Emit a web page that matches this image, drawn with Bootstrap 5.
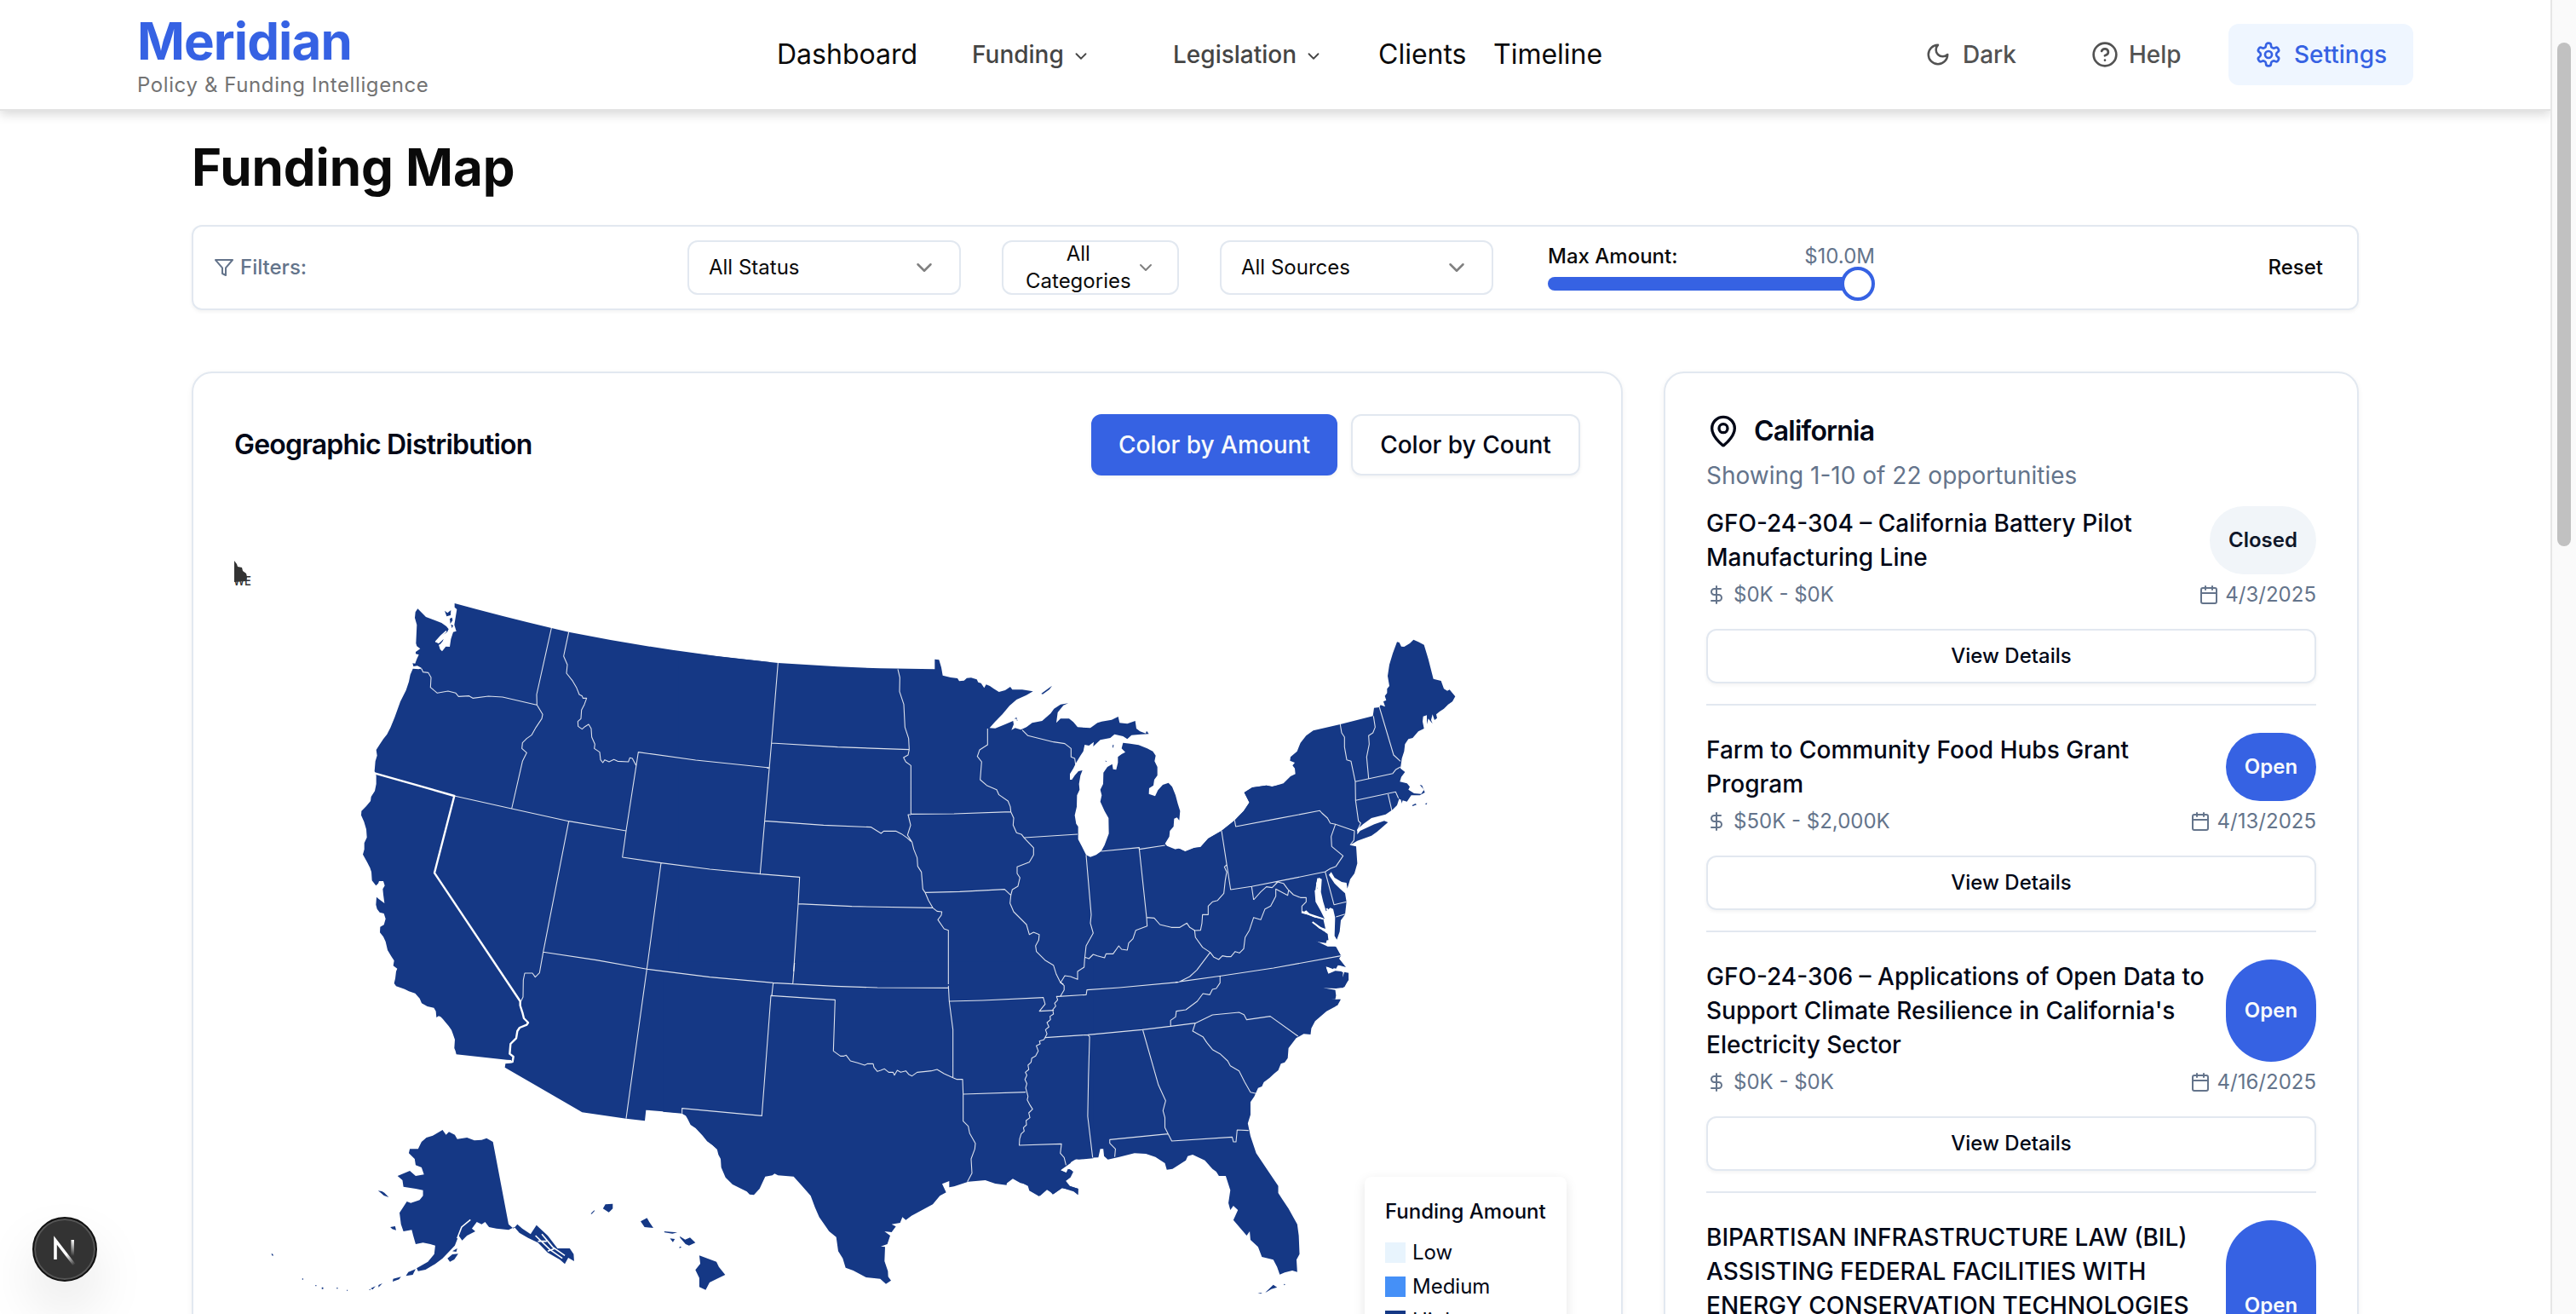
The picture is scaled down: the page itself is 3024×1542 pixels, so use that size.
<!DOCTYPE html>
<html lang="en">
<head>
<meta charset="utf-8">
<title>Meridian – Funding Map</title>
<link href="https://cdn.jsdelivr.net/npm/bootstrap@5.3.0/dist/css/bootstrap.min.css" rel="stylesheet">
<style>
:root{--brand:#3662e3;--line:#e2e8f0;--muted:#64748b;--ink:#020817;--land:#153885}
html,body{height:1542px;overflow:hidden}
body{font-family:Inter,sans-serif;color:var(--ink);background:#fff;font-size:24px;line-height:32px}
svg{display:block;flex:none}
.ico{fill:none;stroke:currentColor;stroke-width:2;stroke-linecap:round;stroke-linejoin:round}
.page-col{width:2994px;height:1542px;overflow:hidden}
.scroll-track{width:30px;background:#fafafa;border-left:2px solid #e6e6e6;padding:50px 6px 0}
.scroll-thumb{height:591px;border-radius:8px;background:#c1c1c1}
.topbar{height:130px;border-bottom:2px solid #e3e3e3;box-shadow:0 4px 12px rgba(0,0,0,.16);padding:0 161px;position:relative;background:#fff}
.logo-name{font-size:60px;font-weight:700;line-height:60px;letter-spacing:-.9px;color:var(--brand);margin-top:18px}
.logo-tag{font-size:24px;line-height:32px;letter-spacing:.6px;color:#737373;margin-top:6px}
.logo-box{width:751px}
.nav-main{font-size:32px;color:#0a0a0a;height:128px}
.nav-drop{font-size:28px;font-weight:500;color:#454545}
.act{font-size:28px;font-weight:500;color:#525252;gap:14px}
.act-set{background:#eff6ff;color:var(--brand);border-radius:12px;width:217px;height:72px}
.h-title{font-size:60px;font-weight:700;line-height:72px;letter-spacing:-.05px;color:#0a0a0a;margin:30px 0 0}
.main-col{padding-left:225px;width:2769px}
.filterbar{height:100px;margin-top:32px;border:2px solid var(--line);border-radius:12px;box-shadow:0 2px 4px rgba(0,0,0,.05);padding-left:24px}
.pick{height:64px;border:2px solid var(--line);border-radius:12px;padding:0 26px 0 23px;color:#0a0a0a}
.pick svg{color:#808080}
.slider-track{height:16px;border-radius:8px;background:var(--brand);width:370px}
.slider-knob{position:absolute;right:0;top:-12px;width:40px;height:40px;border-radius:50%;border:4px solid var(--brand);background:#fff}
.panel{border:2px solid var(--line);border-radius:24px;padding:48px;height:1250px;box-shadow:0 2px 6px rgba(0,0,0,.06);background:#fff}
.panel-map{width:1680px}.panel-list{width:816px}
.ptitle{font-size:32px;font-weight:600;letter-spacing:-.8px;line-height:40px}
.tbtn{height:72px;border-radius:12px;font-size:28px;font-weight:500;border:2px solid var(--line);box-shadow:0 2px 4px rgba(0,0,0,.05)}
.tbtn-on{background:var(--brand);border-color:var(--brand);color:#f8fafc}
.muted{color:var(--muted)}
.sub{font-size:28px;line-height:40px;margin:12px 0 16px}
.op{border-bottom:2px solid var(--line);padding-bottom:24px;margin-bottom:32px}
.op-t{font-size:28px;line-height:40px;font-weight:500;white-space:nowrap}
.pill{border-radius:60px;font-weight:600;width:106px;background:var(--brand);color:#f8fafc}
.pill-c{background:#f1f5f9;color:#0f172a;width:125px}
.vbtn{height:64px;border:2px solid var(--line);border-radius:12px;margin-top:24px;font-weight:500;box-shadow:0 2px 4px rgba(0,0,0,.05)}
.legend{position:absolute;left:1375px;top:943px;width:237px;padding:25px 24px;background:#fff;border-radius:8px;box-shadow:0 4px 14px rgba(0,0,0,.1)}
.sw{width:24px;height:24px}
.devbadge{position:absolute;left:38px;top:1428px;width:76px;height:76px;border-radius:50%;background:#333;border:2px solid #111;box-shadow:inset 0 0 0 2px #555,0 32px 64px rgba(0,0,0,.1)}
.land path{fill:var(--land)}
.edge path{fill:none;stroke:#fff;stroke-width:1.1;stroke-linejoin:round;vector-effect:non-scaling-stroke;opacity:.85}
.edge path.sel{stroke-width:2.4;opacity:1}
.cut{stroke:#fff;vector-effect:non-scaling-stroke}
</style>
</head>
<body>
<svg width="0" height="0" class="position-absolute">
<symbol id="chev" viewBox="0 0 24 24"><path d="m6 9 6 6 6-6"/></symbol>
<symbol id="usd" viewBox="0 0 24 24"><path d="M12 2v20M17 5H9.500a3.500 3.500 0 0 0 0 7h5a3.500 3.500 0 0 1 0 7H6"/></symbol>
<symbol id="cal" viewBox="0 0 24 24"><path d="M8 2v4M16 2v4M3 10h18"/><rect x="3" y="4" width="18" height="18" rx="2"/></symbol>
</svg>
<div class="d-flex">
<div class="page-col">
<header class="topbar d-flex">
  <div class="logo-box"><div class="logo-name">Meridian</div><div class="logo-tag">Policy &amp; Funding Intelligence</div></div>
  <nav class="nav-main d-flex align-items-center">
    <span style="width:229px">Dashboard</span>
    <span class="nav-drop d-flex align-items-center" style="width:236px;gap:9px">Funding <svg class="ico mt-1" width="22" height="22"><use href="#chev"/></svg></span>
    <span class="nav-drop d-flex align-items-center" style="width:241px;gap:9px">Legislation <svg class="ico mt-1" width="22" height="22"><use href="#chev"/></svg></span>
    <span style="width:135px">Clients</span><span>Timeline</span>
  </nav>
  <div class="d-flex align-items-center ms-auto" style="height:128px">
    <div class="act d-flex align-items-center" style="width:195px"><svg class="ico" width="30" height="30" viewBox="0 0 24 24"><path d="M12 3a6 6 0 0 0 9 9 9 9 0 1 1-9-9Z"/></svg>Dark</div>
    <div class="act d-flex align-items-center" style="width:161px;gap:12px"><svg class="ico" width="32" height="32" viewBox="0 0 24 24"><circle cx="12" cy="12" r="10"/><path d="M9.090 9a3 3 0 0 1 5.830 1c0 2-3 3-3 3M12 17h.01"/></svg>Help</div>
    <div class="act act-set d-flex align-items-center justify-content-center"><svg class="ico" width="32" height="32" viewBox="0 0 24 24"><path d="M12.220 2h-.44a2 2 0 0 0-2 2v.18a2 2 0 0 1-1 1.730l-.43.25a2 2 0 0 1-2 0l-.15-.08a2 2 0 0 0-2.730.73l-.22.38a2 2 0 0 0 .73 2.730l.15.1a2 2 0 0 1 1 1.720v.51a2 2 0 0 1-1 1.740l-.15.09a2 2 0 0 0-.73 2.730l.22.38a2 2 0 0 0 2.730.73l.15-.08a2 2 0 0 1 2 0l.43.25a2 2 0 0 1 1 1.730V20a2 2 0 0 0 2 2h.44a2 2 0 0 0 2-2v-.18a2 2 0 0 1 1-1.730l.43-.25a2 2 0 0 1 2 0l.15.08a2 2 0 0 0 2.730-.73l.22-.39a2 2 0 0 0-.73-2.730l-.15-.08a2 2 0 0 1-1-1.740v-.5a2 2 0 0 1 1-1.740l.15-.09a2 2 0 0 0 .73-2.730l-.22-.38a2 2 0 0 0-2.730-.73l-.15.08a2 2 0 0 1-2 0l-.43-.25a2 2 0 0 1-1-1.730V4a2 2 0 0 0-2-2z"/><circle cx="12" cy="12" r="3"/></svg>Settings</div>
  </div>
</header>
<main class="main-col">
  <h1 class="h-title">Funding Map</h1>
  <div class="filterbar d-flex align-items-center">
    <div class="muted d-flex align-items-center" style="width:556px;gap:7px;font-weight:500"><svg class="ico" width="24" height="24" viewBox="0 0 24 24"><path d="M22 3H2l8 9.460V19l4 2v-8.540L22 3z"/></svg>Filters:</div>
    <div class="pick d-flex align-items-center justify-content-between" style="width:321px">All Status<svg class="ico" width="30" height="30"><use href="#chev"/></svg></div>
    <div class="pick d-flex align-items-center justify-content-between text-center" style="width:208px;margin:0 48px;padding:0 25px 0 26px">All<br>Categories<svg class="ico" width="24" height="24"><use href="#chev"/></svg></div>
    <div class="pick d-flex align-items-center justify-content-between" style="width:321px">All Sources<svg class="ico" width="30" height="30"><use href="#chev"/></svg></div>
    <div style="width:384px;margin-left:64px">
      <div class="d-flex justify-content-between" style="height:40px;margin-top:-2px"><span style="font-weight:500;color:#0a0a0a">Max Amount:</span><span class="muted">$10.0M</span></div>
      <div class="position-relative"><div class="slider-track"></div><div class="slider-knob"></div></div>
    </div>
    <div class="ms-auto" style="font-weight:500;color:#0a0a0a;padding-right:40px">Reset</div>
  </div>
  <div class="d-flex" style="gap:48px;margin-top:72px">
    <section class="panel panel-map position-relative">
      <div class="d-flex align-items-center" style="gap:16px">
        <div class="ptitle me-auto">Geographic Distribution</div>
        <div class="tbtn tbtn-on d-flex align-items-center justify-content-center" style="width:289px">Color by Amount</div>
        <div class="tbtn d-flex align-items-center justify-content-center" style="width:269px">Color by Count</div>
      </div>
      <svg width="1580" height="984" viewBox="275 558 1580 984">
        <!-- State labels stacked on the map origin -->
        <g fill="#333"><path d="M275 658l3 4 1 3 5 1 1 4 4 3 1 4 -1 5-14 1z"/><text x="274" y="687" font-size="15" font-weight="500" textLength="21" lengthAdjust="spacingAndGlyphs">WE</text></g>
        <g class="land">
        <!-- Pacific and mountain west -->
        <g transform="translate(400 690) scale(.33333)"><path d="M401 54Q565 99 742 141L803 155Q1160 226 1510 261L1510 1990 1335 1985 1310 1962 1290 1948 1275 1928 1250 1902 1232 1890 1222 1870 1215 1858 1200 1848 1075 1838 1071 1876 1005 1868 850 1846 840 1840 578 1688 580 1675 603 1672 600 1662 585 1661 407 1642 404 1630 400 1620 402 1590 395 1570 390 1556 380 1542 368 1528 360 1518 352 1510 345 1507 337 1512 335 1490 328 1478 305 1473 285 1462 278 1445 262 1427 240 1420 225 1412 195 1402 188 1392 192 1375 195 1350 199 1340 185 1330 188 1312 178 1297 165 1275 158 1245 150 1228 138 1213 139 1193 152 1186 158 1165 152 1146 137 1142 128 1130 124 1115 126 1088 134 1095 154 1110 150 1080 148 1060 155 1048 150 1032 135 1032 132 1040 124 1048 110 1030 108 1000 103 985 93 965 78 938 83 920 83 898 92 878 90 850 82 823 72 800 73 785 90 768 105 750 107 735 120 715 125 690 125 660 119 645 122 610 128 590 125 570 138 550 150 532 163 515 175 492 190 455 210 400 230 360 240 330 245 305 254 284 275 286 285 282 270 274 256 276 253 265 262 266 268 250 275 235 264 232 264 225 280 214 268 205 265 195 268 130 261 105 263 85 271 73 300 102 330 113 355 123 372 135 380 145 375 155 355 168 333 190 345 196 362 180 358 195 345 200 350 216 357 223 370 206 384 207 388 180 396 155 407 152 400 130 405 100 409 75 401 68Z"/><path d="M366 80l10 8 12-10-1 18-14 4zM384 108l8-4 2 10-8 12zM388 128l8 4-4 10z"/><path class="cut" style="fill:none" stroke-width="1.600" d="M372 152L352 170 334 190M392 150L378 175 374 205M366 182L352 200"/></g>
        <!-- Upper Midwest and Great Lakes -->
        <g transform="translate(800 740) scale(.33333)"><path d="M-10 74L100 88 200 99 340 114 550 127 700 133 892 136 892 101 907 103 915 130 920 158 948 165 972 168 978 178 995 176 1005 167 1020 166 1040 172 1045 182 1055 185 1066 202 1073 190 1086 195 1100 205 1118 216 1140 210 1158 198 1165 208 1200 208 1238 214 1215 227 1180 243 1155 265 1130 295 1105 320 1085 343 1105 344 1140 330 1168 318 1170 330 1162 350 1175 343 1195 349 1215 340 1235 325 1270 318 1300 292 1312 275 1335 260 1362 256 1345 263 1325 288 1320 325 1335 310 1365 310 1380 322 1395 340 1440 343 1465 325 1480 320 1515 314 1538 303 1543 325 1570 328 1598 318 1602 345 1615 355 1635 362 1638 353 1646 364 1620 365 1585 368 1570 382 1555 372 1525 365 1510 378 1475 385 1450 408 1452 392 1435 405 1420 402 1415 425 1405 440 1390 465 1380 485 1368 505 1368 525 1375 525 1385 510 1398 495 1412 492 1405 510 1400 540 1402 560 1393 580 1392 620 1385 650 1390 680 1397 690 1397 735 1410 760 1425 790 1440 797 1460 790 1478 777 1490 755 1505 715 1504 660 1490 635 1475 602 1480 580 1475 560 1485 540 1486 500 1500 480 1517 470 1520 488 1531 490 1537 465 1537 445 1550 435 1563 428 1550 415 1555 395 1580 398 1610 403 1640 415 1660 425 1670 440 1666 460 1676 480 1676 510 1665 525 1662 545 1647 555 1646 575 1668 583 1678 562 1695 543 1715 536 1728 550 1740 580 1748 610 1756 635 1753 668 1745 658 1735 662 1733 690 1720 705 1718 725 1703 750 1710 758 1740 770 1755 768 1773 778 1805 765 1828 763 1855 732 1902 705 1948 668 1980 635 2000 605 1982 570 2010 553 2060 545 2080 549 2110 543 2110 1270 -10 1270Z"/><path d="M1267 222L1305 194 1296 207 1272 224zM1519 402l3 0-1 10-3 0zM1492 458l5 1-1 4zM1172 310l8-4 2 5zM1180 313l4 2-2 3z"/></g>
        <!-- Northeast -->
        <g transform="translate(1380 730) scale(.33333)"><path d="M0 800L10 797 35 808 68 795 88 792 115 762 162 735 208 698 240 665 260 635 242 600 270 582 320 575 340 580 380 568 405 543 422 535 420 515 412 505 420 495 403 488 405 475 428 455 440 425 460 400 485 382 580 360 695 331 699 302 718 300 722 292 738 298 732 280 742 275 737 260 745 250 745 235 753 225 747 190 753 150 765 110 780 70 788 72 795 86 805 87 825 75 838 62 855 70 875 80 890 130 908 200 935 207 945 235 957 242 965 238 985 262 975 280 960 290 945 305 930 315 918 325 921 338 912 345 905 325 900 345 905 358 890 340 885 360 885 328 872 332 870 350 875 375 855 385 835 408 820 412 808 430 805 455 797 480 792 515 808 528 795 545 790 562 815 568 825 580 820 590 840 603 865 605 875 590 860 573 868 575 878 600 860 610 830 610 815 632 800 628 795 642 788 620 780 645 765 660 740 677 690 690 660 712 640 730 640 748 650 735 700 712 735 700 748 705 710 738 690 752 640 770 615 785 636 790 640 850 630 885 615 905 605 938 602 918 585 915 560 900 548 880 540 890 560 920 580 940 597 955 602 985 597 1030 582 1050 578 1090 568 1118 560 1105 562 1040 555 1010 545 1006 530 1018 520 985 512 950 515 905 505 900 495 920 500 938 490 945 493 985 510 1015 525 1045 475 1030 460 1015 445 1025 465 1030 490 1040 520 1045 528 1080 500 1070 480 1055 510 1082 525 1090 535 1110 530 1130 495 1125 525 1142 545 1150 565 1143 583 1175 575 1185 600 1215 565 1205 555 1222 530 1212 535 1240 565 1232 590 1232 588 1255 597 1235 608 1240 608 1260 595 1285 565 1290 518 1288 560 1300 560 1325 530 1330 582 1328 570 1350 0 1350Z"/><path d="M833 645l12-6 4 4-14 5zM878 640l8-3-2 6z"/><path class="cut" style="fill:none" stroke-width="2" d="M502 902L496 940 500 985 515 1015 540 1030 540 1120M445 1020L480 1032 520 1045M482 1056L525 1088M495 1126L545 1148M532 1008L552 1040M790 625L796 645"/></g>
        <!-- Southeast -->
        <g transform="translate(1180 1090) scale(.44643 .33333)"><path d="M828 0L848 18 850 40 818 43 848 62 868 62 882 95 878 105 892 130 875 128 870 140 842 132 850 158 868 148 885 150 886 175 892 152 903 155 903 180 888 208 835 208 868 215 870 235 868 248 845 250 880 248 870 272 845 290 815 325 805 350 803 372 785 370 765 385 745 420 743 455 735 470 725 475 718 498 707 510 695 525 680 540 675 555 665 560 655 590 645 610 645 655 638 685 645 730 660 790 690 850 718 905 718 930 730 955 745 985 768 1040 772 1080 774 1145 766 1165 768 1208 755 1203 735 1210 722 1217 715 1190 705 1165 675 1155 665 1120 645 1095 643 1065 635 1080 600 1025 612 990 600 975 592 990 587 965 592 920 580 870 562 870 555 855 545 845 525 815 493 795 480 800 475 815 440 845 425 848 420 825 395 803 370 792 340 790 300 803 270 812 260 800 258 775 250 775 245 805 190 808 175 820 160 830 145 850 160 860 165 845 175 850 158 885 170 905 192 915 192 937 180 925 150 912 125 935 113 915 92 940 70 920 60 900 40 895 20 880 0 900 0 0Z"/><path d="M684 1280L705 1253 715 1262 700 1268 688 1278zM733 1250l4 2-4 3zM664 1282l12 0-4 3z"/></g>
        <!-- South central and Gulf coast -->
        <g transform="translate(780 1130) scale(.33333)"><path d="M-5 -5L-5 524 62 530 80 540 95 568 110 578 130 602 150 625 185 655 190 675 198 690 200 720 215 755 240 780 290 805 300 815 315 817 335 795 355 752 380 748 388 742 400 748 455 752 480 780 515 820 530 860 545 895 580 945 605 965 612 1015 628 1040 638 1073 665 1083 710 1107 760 1112 780 1130 798 1118 788 1105 787 1085 775 1050 777 1000 762 998 785 990 795 960 775 945 800 948 815 928 800 920 830 915 838 895 850 905 870 890 945 850 970 820 992 808 978 778 1003 768 1003 790 1020 787 1070 770 1130 765 1165 777 1205 782 1207 762 1235 757 1250 770 1280 785 1285 802 1320 822 1330 805 1345 797 1370 814 1400 793 1440 800 1455 815 1457 795 1425 785 1410 770 1430 755 1440 735 1425 725 1420 740 1395 730 1430 705 1437 690 1460 692 1510 688 1510 -5Z"/></g>
        <!-- Alaska and Hawaii -->
        <g transform="translate(0 1290) scale(.57407 .33333)"><path d="M905 108L912 125 918 115 930 125 935 140 955 135 970 145 985 143 995 137 1008 150 1040 440 1050 455 1058 440 1068 455 1085 475 1097 443 1120 480 1140 525 1165 525 1173 545 1174 570 1162 558 1155 580 1145 565 1120 540 1100 505 1080 488 1062 470 1052 450 1040 460 1015 455 1000 450 992 432 985 440 975 432 965 455 972 465 955 480 945 497 938 480 930 515 905 560 890 580 870 600 855 605 852 595 875 572 888 545 890 515 880 510 865 505 850 510 845 480 842 460 825 465 820 440 817 400 832 360 840 365 858 355 865 340 865 320 850 315 825 308 823 285 813 270 838 252 850 270 867 265 862 240 850 232 848 210 836 190 838 175 855 175 862 150 872 135 885 128zM915 560l10-14 12-2-8 20-9 8zM925 535l10-10-2 12zM850 598l-15 10-5 14 14-4zM820 625l-16 7-1 10 13-8zM782 648l-8 6 0 8zM768 658l-10 8 4 4zM757 668l-3 3 4 0zM709 671h2v3h-2zM688 664h3v3h-3zM658 662h3v6h-3zM645 654h2v4h-2zM618 631h2v4h-2zM555 543l3 2 1 6-3-1zM773 322l8 2 5 5 9 16-10-6-6-9zM798 450l10-3 2 14-8-4zM1208 403l7-12 1 2-6 11zM1238 370l15-2 0 17-8 13-12-13zM1310 430l13-12 5 15 8 20-18-3zM1358 465l27 4-10 4-16-4zM1370 490l10 2-4 11zM1390 482l11 12 10-7 11 18-13 10-7-5-11-22zM1390 518l4 3-5 3zM1430 550l35 22 5 18 13 28-18 15-14 12-8 26-13-10 0-32-8-28 10-22z"/>
        <path class="cut" style="fill:none" stroke-width="1.600" d="M962 424L944 450 935 490M1095 480L1125 530 1150 560M1108 475L1130 520 1155 550M1100 500L1118 500M1120 535L1135 525"/></g>
        </g>
        <g class="edge">
        <g transform="translate(400 690) scale(.33333)"><path d="M262 278L285 285 290 296 308 298 318 315 316 350 340 370 378 363 405 370 415 382 452 380 465 388 520 381 570 384 690 412M742 141L690 375 691 412 711 445 708 460 688 490 672 518 655 530 640 545 638 565 655 580 640 610 602 777M803 155L785 240 798 270 795 300 815 325 830 350 840 375 850 380 853 388 866 388 858 410 848 430 846 460 835 470 836 487 850 497 860 488 873 480 882 495 884 525 895 550 893 565 912 578 915 605 923 615 930 605 945 612 962 604 975 610 1013 612 1018 598 1027 600 1040 625M1510 633L1250 606 1048 578 1005 855 992 948 1128 968 1300 990 1478 1007M400 732L602 777 803 821 1005 855M803 821L713 1282 700 1355 685 1370 675 1356 648 1356 643 1380 642 1440 632 1460M1128 968L1078 1342 1005 1868M713 1282L900 1310 1078 1342 1300 1370 1500 1388"/>
        <path class="sel" d="M119 652L260 692 400 732 330 1003 632 1455 632 1470 640 1495 645 1515 660 1530 655 1538 630 1548 622 1560 618 1585 598 1605 595 1640 608 1650 605 1668 583 1670"/></g>
        <g transform="translate(800 740) scale(.33333)"><path d="M340 114L317 396 293 670 277 857M300 483L307 484M317 396L550 410 802 419M293 670L500 685 668 692 703 714 712 706 755 706 775 716 795 730 808 742M277 857L416 868 411 962 395 1200M411 962L600 971 885 976M762 136L769 165 768 215 783 260 787 340 800 380 802 419 798 438 782 447 790 462 808 475 808 646M808 648L798 648 807 685 796 720 812 745 818 770 830 800 832 830 845 850 850 910 858 922 870 950 885 976 900 988 917 990 915 1002 903 1018 925 1050 940 1055 940 1245M808 646L960 645 1160 638M858 922L980 919 1138 911 1160 932M1078 345L1078 402 1050 420 1042 443 1057 462 1052 525 1075 545 1110 560 1118 578 1150 600 1158 620 1160 638 1170 660 1168 685 1180 712 1198 718 1207 730 1240 765 1240 790 1225 815 1182 832 1182 855 1192 870 1185 900 1165 912 1160 932 1157 960 1170 990 1215 1035 1225 1070 1240 1062 1260 1070 1258 1090 1247 1110 1250 1130 1280 1160 1310 1178 1320 1210 1335 1240 1345 1245M1207 729L1395 717M1200 350L1220 370 1310 392 1350 398 1372 415 1372 445 1385 450 1388 472M1425 790L1443 1000 1440 1030 1450 1065 1425 1110 1420 1155 1418 1185 1395 1200 1395 1228 1370 1218 1350 1215 1335 1240M1478 777L1612 764 1612 770 1703 756M1612 766L1638 1010M1420 1150L1435 1155 1450 1140 1465 1145 1490 1152 1495 1138 1520 1138 1540 1110 1550 1122 1570 1125 1575 1100 1590 1085 1600 1055 1640 1040 1638 1010 1665 1012 1685 1035 1725 1045 1755 1045 1780 1030 1790 1045 1808 1056 1828 1055 1833 1030 1835 1000 1855 1000 1855 970 1870 955 1888 950 1910 925 1915 880 1920 850 1912 832 1920 825"/></g>
        <g transform="translate(1380 730) scale(.33333)"><path d="M67 1085L70 1110 95 1145 122 1163 135 1180 152 1188 165 1175 180 1178 195 1178 210 1160 225 1165 240 1150 245 1110 260 1085 275 1040 300 1048 315 1010 335 1000 353 965 353 940 395 962 398 945M275 978L300 950 320 932 340 935 360 915 380 920 395 940 415 960 440 970 460 970 460 985 445 1000 445 1025M162 735L194 942 268 931 400 905 527 879M268 931L275 978M208 698L212 720 360 692 508 664 515 672 535 690 545 708 563 712 548 755 550 790 590 823 565 860 545 868 527 879 558 995 602 985M563 712L630 735 628 768 615 785M640 735L652 708 644 700 634 628 633 562 618 490 603 485 595 440 595 405 585 390 580 360M697 331L703 370 695 390 680 400 682 430 673 475 680 550M718 300L768 468 792 490M633 562L765 533 775 520 792 510M634 628L775 598 785 620M748 604L762 665M583 1175L345 1218 160 1246 0 1268M122 1163L75 1225 50 1248 10 1268M565 1038L597 1028"/></g>
        <g transform="translate(1180 1090) scale(.44643 .33333)"><path d="M455 188L300 207 215 215 213 232 140 238M565 165L565 190 555 210 545 213 538 232 520 228 505 255 475 285 450 290 448 310 435 322 435 343M105 383L217 373 360 355 435 343 500 332M500 332L545 303 615 294 628 302 635 320 697 308 770 378M500 332L493 360 520 380 530 400 545 425 565 440 585 465 592 482 615 500 630 540 645 575 660 580M217 373L222 380 219 520 217 660 230 805M362 357L403 550 422 605 415 640 420 665 420 700 438 747 597 733 600 750 607 750 610 708 640 710M428 722L275 742 275 755 290 775 288 803M145 188L155 200 155 215 145 238 135 238 138 250 130 262 133 272 125 285 127 300 118 308 119 320 110 330 115 345 106 355 110 370 102 390 90 395 92 405 82 412 87 430 80 448 70 455 68 470 60 480 62 495 53 505 57 515 52 530 57 545 54 560 60 590 58 602 65 620 72 635 62 648 65 665 55 675 56 690 48 700 50 712 42 722 38 740 37 762 148 757 145 790 155 805 160 832M100 241L105 265 90 290 128 287"/></g>
        <g transform="translate(780 1130) scale(.33333)"><path d="M360 68L383 70 600 82 750 87 1000 88M383 70L378 115M62 530L62 512 343 538 375 115 601 130 595 310 620 328 632 328 640 325 655 345 680 352 705 360 715 355 735 355 738 368 750 382 762 378 775 373 790 385 805 385 810 395 820 378 832 385 850 380 860 392 872 398 890 385 920 382 940 380 960 375 985 390 1018 405 1030 410 1050 410 1052 462 1052 557 1070 575 1075 600 1095 635 1093 655 1080 690 1083 740 1067 770M1000 80L1003 135 1016 235 1016 405M1003 135L1120 132 1335 122M1052 462L1272 455M458 0L452 75"/></g>
        </g>
      </svg>
      <div class="legend">
        <div style="font-weight:500;line-height:32px;margin:0 0 16px;white-space:nowrap">Funding Amount</div>
        <div class="d-flex align-items-center mb-2" style="gap:8px"><span class="sw" style="background:#e8f4fd"></span>Low</div>
        <div class="d-flex align-items-center mb-2" style="gap:8px"><span class="sw" style="background:#4590f7"></span>Medium</div>
        <div class="d-flex align-items-center" style="gap:8px"><span class="sw" style="background:#153885"></span>High</div>
      </div>
    </section>
    <section class="panel panel-list">
      <div class="d-flex align-items-center ptitle" style="gap:16px"><svg class="ico" width="40" height="40" viewBox="0 0 24 24"><path d="M20 10c0 4.990-5.540 10.190-7.400 11.800a1 1 0 0 1-1.200 0C9.540 20.190 4 14.990 4 10a8 8 0 0 1 16 0"/><circle cx="12" cy="10" r="3"/></svg>California</div>
      <div class="sub muted">Showing 1-10 of 22 opportunities</div>
      <div class="op">
        <div class="d-flex justify-content-between"><div class="op-t">GFO-24-304 – California Battery Pilot<br>Manufacturing Line</div><span class="pill pill-c d-flex align-items-center justify-content-center">Closed</span></div>
        <div class="d-flex justify-content-between muted mt-2"><span class="d-flex align-items-center" style="gap:8px"><svg class="ico" width="24" height="24"><use href="#usd"/></svg>$0K - $0K</span><span class="d-flex align-items-center" style="gap:7px"><svg class="ico" width="24" height="24"><use href="#cal"/></svg>4/3/2025</span></div>
        <div class="vbtn d-flex align-items-center justify-content-center">View Details</div>
      </div>
      <div class="op">
        <div class="d-flex justify-content-between"><div class="op-t">Farm to Community Food Hubs Grant<br>Program</div><span class="pill d-flex align-items-center justify-content-center">Open</span></div>
        <div class="d-flex justify-content-between muted mt-2"><span class="d-flex align-items-center" style="gap:8px"><svg class="ico" width="24" height="24"><use href="#usd"/></svg>$50K - $2,000K</span><span class="d-flex align-items-center" style="gap:8px"><svg class="ico" width="24" height="24"><use href="#cal"/></svg>4/13/2025</span></div>
        <div class="vbtn d-flex align-items-center justify-content-center">View Details</div>
      </div>
      <div class="op">
        <div class="d-flex justify-content-between"><div class="op-t">GFO-24-306 – Applications of Open Data to<br>Support Climate Resilience in California's<br>Electricity Sector</div><span class="pill d-flex align-items-center justify-content-center">Open</span></div>
        <div class="d-flex justify-content-between muted mt-2"><span class="d-flex align-items-center" style="gap:8px"><svg class="ico" width="24" height="24"><use href="#usd"/></svg>$0K - $0K</span><span class="d-flex align-items-center" style="gap:8px"><svg class="ico" width="24" height="24"><use href="#cal"/></svg>4/16/2025</span></div>
        <div class="vbtn d-flex align-items-center justify-content-center">View Details</div>
      </div>
      <div class="d-flex justify-content-between" style="height:200px"><div class="op-t">BIPARTISAN INFRASTRUCTURE LAW (BIL)<br>ASSISTING FEDERAL FACILITIES WITH<br>ENERGY CONSERVATION TECHNOLOGIES</div><span class="pill d-flex align-items-center justify-content-center">Open</span></div>
    </section>
  </div>
</main>
</div>
<div class="scroll-track"><div class="scroll-thumb"></div></div>
</div>
<div class="devbadge"><svg width="72" height="72" viewBox="0 0 72 72"><defs><linearGradient id="fadeA" x1="0" y1="0" x2="0" y2="1"><stop offset="0" stop-color="#fff"/><stop offset="1" stop-color="#fff" stop-opacity="0"/></linearGradient><linearGradient id="fadeB" gradientUnits="userSpaceOnUse" x1="38" y1="42" x2="48" y2="54"><stop offset="0" stop-color="#fff"/><stop offset="1" stop-color="#fff" stop-opacity="0"/></linearGradient></defs><path d="M25 48V25.500L47 54" fill="none" stroke="url(#fadeB)" stroke-width="3.600"/><rect x="43.500" y="25" width="3.500" height="19" fill="url(#fadeA)"/></svg></div>
</body>
</html>
